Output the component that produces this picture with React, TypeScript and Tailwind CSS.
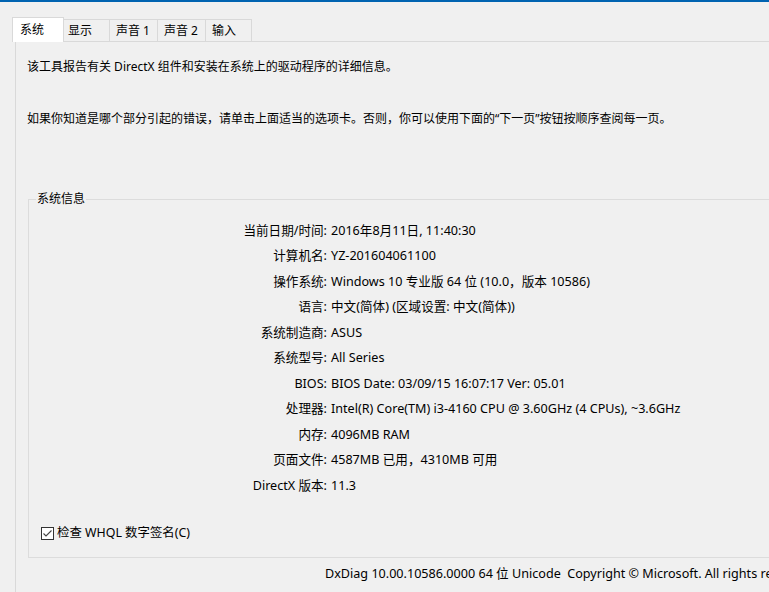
import React from "react";

const rows: [string, string][] = [
  ["当前日期/时间:", "2016年8月11日, 11:40:30"],
  ["计算机名:", "YZ-201604061100"],
  ["操作系统:", "Windows 10 专业版 64 位 (10.0，版本 10586)"],
  ["语言:", "中文(简体) (区域设置: 中文(简体))"],
  ["系统制造商:", "ASUS"],
  ["系统型号:", "All Series"],
  ["BIOS:", "BIOS Date: 03/09/15 16:07:17 Ver: 05.01"],
  ["处理器:", "Intel(R) Core(TM) i3-4160 CPU @ 3.60GHz (4 CPUs), ~3.6GHz"],
  ["内存:", "4096MB RAM"],
  ["页面文件:", "4587MB 已用，4310MB 可用"],
  ["DirectX 版本:", "11.3"],
];

const tabs = [
  { label: "显示", cls: "w-[46px] pl-[4px]" },
  { label: "声音 1", cls: "w-[48px] pl-[6px]" },
  { label: "声音 2", cls: "w-[48px] pl-[6px]" },
  { label: "输入", cls: "w-[46px] pl-[6px]" },
];

export default function App() {
  return (
    <div className="w-[769px] h-[592px] overflow-hidden bg-[#f0f0f0] text-[12px] leading-[16px] text-black font-['Noto_Sans','Noto_Sans_CJK_SC',sans-serif]">
      {/* window title strip */}
      <div className="h-[2px] bg-[#0063b1]" />

      {/* tab strip */}
      <div className="mt-[15px] flex h-[25px] items-end pl-[12px]">
        <div className="flex h-[25px] w-[52px] items-center border border-b-0 border-[#d9d9d9] bg-white pl-[7px]">
          系统
        </div>
        {tabs.map((t) => (
          <div
            key={t.label}
            className={`flex h-[23px] items-center border-y border-r border-[#d9d9d9] ${t.cls}`}
          >
            {t.label}
          </div>
        ))}
        <div className="h-[23px] flex-1 border-b border-[#d9d9d9]" />
      </div>

      {/* tab page */}
      <div className="ml-[15px] h-[550px] border-l border-[#d9d9d9] pl-[11px] pt-[17px]">
        <p className="whitespace-nowrap">该工具报告有关 DirectX 组件和安装在系统上的驱动程序的详细信息。</p>
        <p className="mt-[36px] whitespace-nowrap">
          如果你知道是哪个部分引起的错误，请单击上面适当的选项卡。否则，你可以使用下面的“下一页”按钮按顺序查阅每一页。
        </p>

        {/* group box */}
        <div className="ml-[1px] mt-[72px] w-[800px]">
          <div className="flex h-0 items-center">
            <span className="ml-[8px] bg-[#f0f0f0] px-[1px]">系统信息</span>
          </div>
          <div className="border border-[#dcdcdc] pt-[18px] pb-[16px]">
            {rows.map(([k, v]) => (
              <div key={k} className="flex h-[25.5px] items-center whitespace-nowrap text-[12.6px]">
                <div className="w-[298px] text-right">{k}</div>
                <div className="ml-[4px]">{v}</div>
              </div>
            ))}
            <div className="mt-[26.5px] flex h-[16px] items-center pl-[12px]">
              <div className="flex h-[13px] w-[13px] items-center justify-center border border-[#333] bg-white">
                <svg width="11" height="11" viewBox="0 0 11 11">
                  <path d="M1.5 5.5 L4 8 L9.5 2.5" fill="none" stroke="#444" strokeWidth="1.1" />
                </svg>
              </div>
              <span className="ml-[3px] text-[12.4px]">检查 WHQL 数字签名(C)</span>
            </div>
          </div>
        </div>

        <div className="ml-[298px] mt-[8px] whitespace-pre text-[12.6px]">
          DxDiag 10.00.10586.0000 64 位 Unicode  Copyright © Microsoft. All rights reserved.
        </div>
      </div>
    </div>
  );
}
